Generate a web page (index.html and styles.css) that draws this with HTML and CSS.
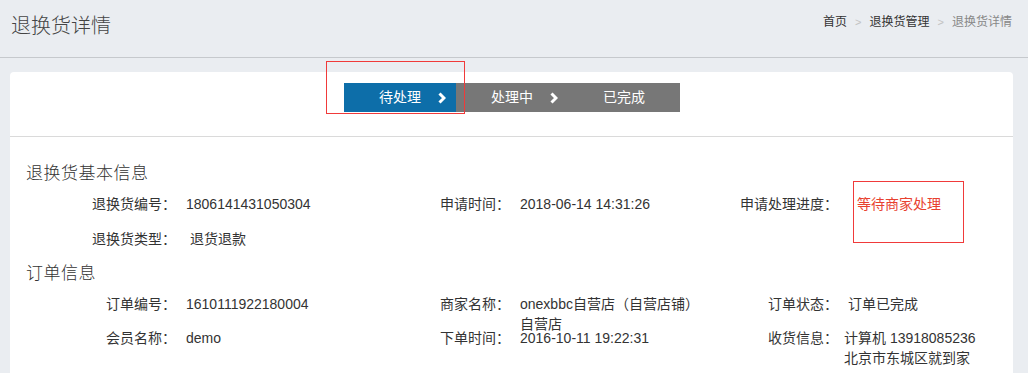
FILE: index.html
```html
<!DOCTYPE html>
<html lang="zh-CN">
<head>
<meta charset="utf-8">
<title>退换货详情</title>
<link rel="stylesheet" href="styles.css">
</head>
<body>
<header class="page-header">
  <h1 class="page-title">退换货详情</h1>
  <nav class="crumbs">
    <a class="crumb">首页</a><span class="crumb-sep">&gt;</span><a class="crumb">退换货管理</a><span class="crumb-sep">&gt;</span><span class="crumb crumb-current">退换货详情</span>
  </nav>
</header>

<main class="card">
  <div class="steps-wrap">
    <div class="steps">
      <div class="step step-active">待处理<svg class="step-arrow" width="8" height="12" viewBox="0 0 8 12"><polyline points="1.5,1.5 6,6 1.5,10.5" fill="none" stroke="#fff" stroke-width="3"/></svg></div>
      <div class="step">处理中<svg class="step-arrow" width="8" height="12" viewBox="0 0 8 12"><polyline points="1.5,1.5 6,6 1.5,10.5" fill="none" stroke="#fff" stroke-width="3"/></svg></div>
      <div class="step">已完成</div>
    </div>
  </div>

  <section class="info">
    <h2 class="info-title">退换货基本信息</h2>
    <div class="info-row">
      <div class="item"><span class="label">退换货编号：</span><span class="value">1806141431050304</span></div>
      <div class="item"><span class="label">申请时间：</span><span class="value">2018-06-14 14:31:26</span></div>
      <div class="item item-c3"><span class="label">申请处理进度：</span><span class="value value-red">等待商家处理</span></div>
    </div>
    <div class="info-row">
      <div class="item"><span class="label">退换货类型：</span><span class="value value-shift">退货退款</span></div>
    </div>

    <h2 class="info-title">订单信息</h2>
    <div class="info-row">
      <div class="item"><span class="label">订单编号：</span><span class="value">1610111922180004</span></div>
      <div class="item"><span class="label">商家名称：</span><span class="value">onexbbc自营店（自营店铺）<br>自营店</span></div>
      <div class="item item-c3"><span class="label">订单状态：</span><span class="value">订单已完成</span></div>
    </div>
    <div class="info-row info-row-tight">
      <div class="item"><span class="label">会员名称：</span><span class="value">demo</span></div>
      <div class="item"><span class="label">下单时间：</span><span class="value">2016-10-11 19:22:31</span></div>
      <div class="item item-c3"><span class="label">收货信息：</span><span class="value value-left">计算机 13918085236<br>北京市东城区就到家</span></div>
    </div>
  </section>
</main>

<div class="mark mark-step"></div>
<div class="mark mark-status"></div>
</body>
</html>
```

FILE: styles.css
```css
html, body {
  margin: 0;
  padding: 0;
  overflow: hidden;
}
body {
  background: #eaedf1;
  font-family: "Liberation Sans", Arial, "Noto Sans CJK SC", sans-serif;
  font-size: 14px;
  color: #333;
  position: relative;
  min-height: 373px;
}

.page-header {
  height: 57px;
  border-bottom: 1px solid #c6c9cd;
  display: flex;
  justify-content: space-between;
  align-items: flex-start;
  padding: 0 16px 0 10px;
}
.page-title {
  margin: 15px 0 0 1px;
  font-size: 20px;
  font-weight: 300;
  line-height: 22px;
  color: #444;
}
.crumbs {
  margin-top: 14px;
  font-size: 12px;
  line-height: 16px;
  display: flex;
  align-items: center;
}
.crumb { color: #333; }
.crumb-current { color: #888; }
.crumb-sep {
  color: #c2c2c2;
  margin: 0 8px;
  font-size: 11px;
}

.card {
  display: block;
  margin: 14px 15px 0 10px;
  background: #fff;
  border-radius: 4px;
  min-height: 330px;
}
.steps-wrap {
  padding: 11px 0 24px;
  border-bottom: 1px solid #dadada;
  display: flex;
  justify-content: center;
}
.steps {
  display: flex;
  margin-left: 1px;
}
.step {
  position: relative;
  width: 112px;
  height: 29px;
  line-height: 29px;
  text-align: center;
  color: #fff;
  background: #777777;
  font-size: 14px;
}
.step-active { background: #0d6ea9; }
.step-arrow {
  position: absolute;
  right: 10px;
  top: 9px;
}

.info {
  padding: 27px 0 0 16px;
}
.info-title {
  margin: 0 0 10px;
  font-size: 17px;
  font-weight: 300;
  line-height: 20px;
  height: 20px;
  letter-spacing: 0.5px;
  color: #333;
}
.info-row {
  display: grid;
  grid-template-columns: 334px 334px 1fr;
  height: 35px;
  line-height: 20px;
}
.item {
  display: flex;
  align-items: flex-start;
}
.label {
  width: 150px;
  flex: none;
  text-align: right;
  margin-right: 10px;
}
.item-c3 .label { width: 144px; }
.value { white-space: nowrap; }
.value-shift { padding-left: 4px; }
.value-red { color: #e8412f; padding-left: 9px; }
.value-left { margin-left: -4px; }
.info-row-tight { margin-top: -1px; }

.mark {
  position: absolute;
  border: 1px solid #f03a3a;
  box-sizing: border-box;
}
.mark-step {
  left: 326px;
  top: 61px;
  width: 139px;
  height: 53px;
}
.mark-status {
  left: 853px;
  top: 181px;
  width: 111px;
  height: 62px;
}
```
